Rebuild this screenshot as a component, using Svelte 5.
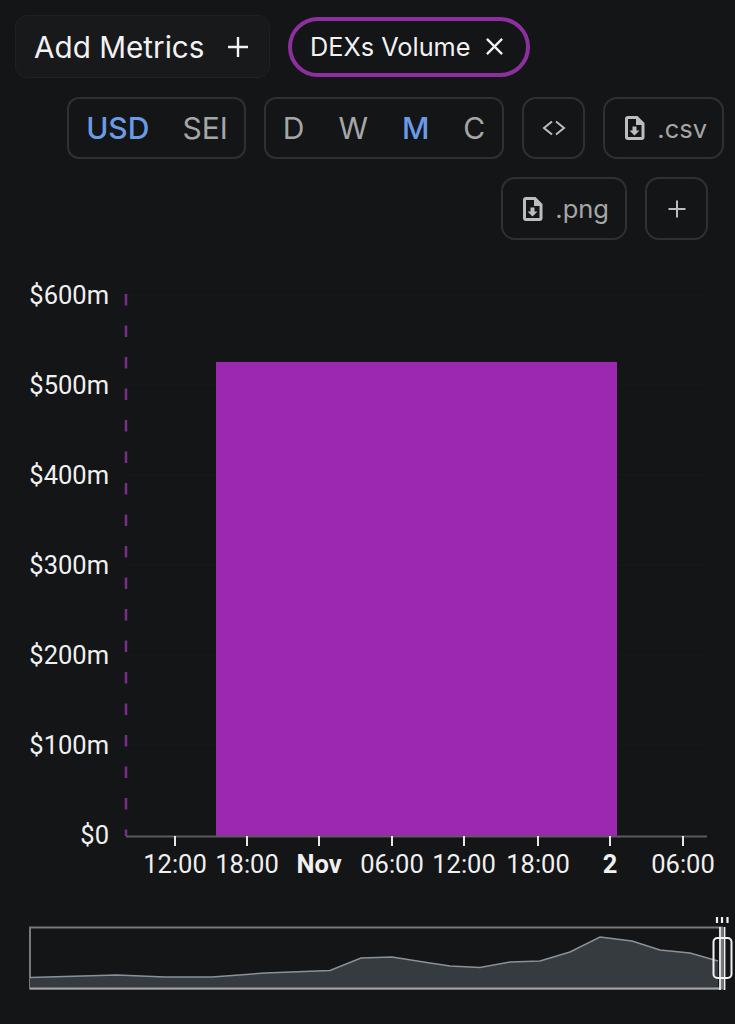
<script>
  const units = [
    { label: "USD", active: true },
    { label: "SEI", active: false }
  ];
  const periods = [
    { label: "D", active: false },
    { label: "W", active: false },
    { label: "M", active: true },
    { label: "C", active: false }
  ];

  const yLabels = [
    { label: "$600m", y: 295 },
    { label: "$500m", y: 385 },
    { label: "$400m", y: 475 },
    { label: "$300m", y: 565 },
    { label: "$200m", y: 655 },
    { label: "$100m", y: 745 },
    { label: "$0", y: 835 }
  ];

  const xLabels = [
    { label: "12:00", x: 175 },
    { label: "18:00", x: 247 },
    { label: "Nov", x: 319, bold: true },
    { label: "06:00", x: 392 },
    { label: "12:00", x: 464 },
    { label: "18:00", x: 538 },
    { label: "2", x: 610, bold: true },
    { label: "06:00", x: 683 }
  ];

  const brushLine = "30,977.5 117,975 165,977 212,977 265,973 330,970.5 361,958 392,957 430,963 450,966 480,967.5 510,962 540,961 570,952 600,937 632,941 660,950 690,953 718,961";
  const brushArea = brushLine + " 718,988 30,988";
</script>

{#snippet fileIcon()}
  <svg class="file" width="21" height="26" viewBox="0 0 21 26">
    <path d="M4 1h9.500L20.500 8v14a3 3 0 0 1-3 3H4a3 3 0 0 1-3-3V4a3 3 0 0 1 3-3z" fill="#bdbdbd" />
    <path d="M4 4h8v6h5.500v12H4z" fill="#131517" />
    <path d="M8.500 11.500h4v4h3l-5 5-5-5h3z" fill="#bdbdbd" />
  </svg>
{/snippet}

<div class="page">
  <div class="metrics">
    <button class="add">
      Add Metrics
      <svg width="22" height="22" viewBox="0 0 22 22"><path d="M11 1v20M1 11h20" stroke="#f2f2f2" stroke-width="2.400" /></svg>
    </button>
    <div class="chip">
      DEXs Volume
      <svg width="19" height="19" viewBox="0 0 20 20"><path d="M2 2l16 16M18 2L2 18" stroke="#f2f2f2" stroke-width="2.400" /></svg>
    </div>
  </div>

  <div class="controls first">
    <div class="group units">
      {#each units as u}
        <span class="opt unit" class:active={u.active}>{u.label}</span>
      {/each}
    </div>
    <div class="group">
      {#each periods as p}
        <span class="opt period" class:active={p.active}>{p.label}</span>
      {/each}
    </div>
    <button class="tool square">
      <svg width="26" height="16" viewBox="0 0 26 16"><path d="M11 1.500L3 8l8 6.500M15 1.500L23 8l-8 6.500" fill="none" stroke="#bdbdbd" stroke-width="2" /></svg>
    </button>
    <button class="tool">{@render fileIcon()} .csv</button>
  </div>

  <div class="controls second">
    <button class="tool">{@render fileIcon()} .png</button>
    <button class="tool square">
      <svg width="20" height="20" viewBox="0 0 20 20"><path d="M10 1.500v17M1.500 10h17" stroke="#bdbdbd" stroke-width="2" /></svg>
    </button>
  </div>

  <svg class="chart" width="735" height="754" viewBox="0 270 735 754">
    {#each yLabels as t}
      {#if t.y !== 835}
        <line x1="126" x2="707" y1={t.y} y2={t.y} stroke="#17191b" stroke-width="1.500" />
      {/if}
      <text class="tick" x="109" y={t.y + 8.500} text-anchor="end">{t.label}</text>
    {/each}

    <line x1="126" x2="126" y1="294" y2="836" stroke="#7d2c8e" stroke-width="2.500" stroke-dasharray="11.500 20" />
    <rect x="216" y="362" width="401" height="474" fill="#9c27b0" />
    <line x1="126" x2="707" y1="836.500" y2="836.500" stroke="#5a5b5d" stroke-width="2" />

    {#each xLabels as t}
      <line x1={t.x} x2={t.x} y1="836" y2="846" stroke="#e6e6e6" stroke-width="2" />
      <text class="tick" class:bold={t.bold} x={t.x} y="873" text-anchor="middle">{t.label}</text>
    {/each}

    <rect x="30" y="927.500" width="692" height="61" fill="none" stroke="#77787a" stroke-width="2" />
    <polygon points={brushArea} fill="#363b40" />
    <polyline points={brushLine} fill="none" stroke="#8b9199" stroke-width="1.500" />
    <line x1="30" x2="720" y1="988.500" y2="988.500" stroke="#a3a5a7" stroke-width="2" />

    <line x1="720" x2="720" y1="927" y2="990" stroke="#f2f2f2" stroke-width="1.800" />
    <line x1="724.500" x2="724.500" y1="927" y2="990" stroke="#f2f2f2" stroke-width="1.800" />
    <rect x="713.500" y="938" width="18" height="40" rx="4" fill="none" stroke="#f2f2f2" stroke-width="2" />
    <path d="M717 917v6M722 917v6M727.500 917v6" stroke="#f2f2f2" stroke-width="2.200" />
  </svg>
</div>

<style>
  :global(body) {
    background: #131517;
  }

  .page {
    width: 735px;
    height: 1024px;
    overflow: hidden;
    font-family: Inter, "Liberation Sans", sans-serif;
    color: #f2f2f2;
    background: #131517;
  }

  button {
    font-family: inherit;
    cursor: pointer;
  }

  .metrics {
    display: flex;
    align-items: center;
    gap: 18px;
    padding: 15px 0 0 15px;
  }

  .add {
    display: flex;
    align-items: center;
    gap: 22px;
    height: 63px;
    width: 255px;
    padding: 0 0 0 18px;
    font-size: 29.700px;
    color: #f2f2f2;
    background: #18191b;
    border: 1.500px solid #1f2123;
    border-radius: 12px;
  }

  .chip {
    display: flex;
    align-items: center;
    gap: 14px;
    height: 60px;
    box-sizing: border-box;
    width: 242px;
    padding-left: 18px;
    font-size: 25.300px;
    border: 4px solid #8e2fa0;
    border-radius: 30px;
  }

  .controls {
    display: flex;
    justify-content: flex-end;
    gap: 18px;
  }

  .first {
    margin-top: 19px;
    padding-right: 11px;
  }

  .first .tool:not(.square) {
    padding-right: 15px;
  }

  .second {
    margin-top: 18px;
    padding-right: 27px;
  }

  .second .tool {
    height: 63px;
  }

  .group {
    display: flex;
    align-items: center;
    height: 62px;
    box-sizing: border-box;
    padding: 0 17px;
    border: 2px solid #2e3032;
    border-radius: 12px;
  }

  .units {
    padding-right: 16px;
  }

  .opt {
    font-size: 30px;
    color: #a6a6a6;
  }

  .unit + .unit {
    margin-left: 33px;
  }

  .period + .period {
    margin-left: 34px;
  }

  .active {
    color: #6b9be6;
    font-weight: 500;
  }

  .tool {
    display: flex;
    align-items: center;
    justify-content: center;
    gap: 12px;
    height: 62px;
    box-sizing: border-box;
    padding: 0 16px 0 19px;
    font-size: 25.500px;
    color: #a6a6a6;
    background: transparent;
    border: 2px solid #2e3032;
    border-radius: 14px;
  }

  .square {
    width: 63px;
    padding: 0;
  }

  .chart {
    display: block;
    margin-top: 30px;
  }

  .tick {
    font-family: Roboto, "Liberation Sans", sans-serif;
    font-size: 25.500px;
    fill: #f0f0f0;
  }

  .bold {
    font-weight: 700;
  }
</style>
